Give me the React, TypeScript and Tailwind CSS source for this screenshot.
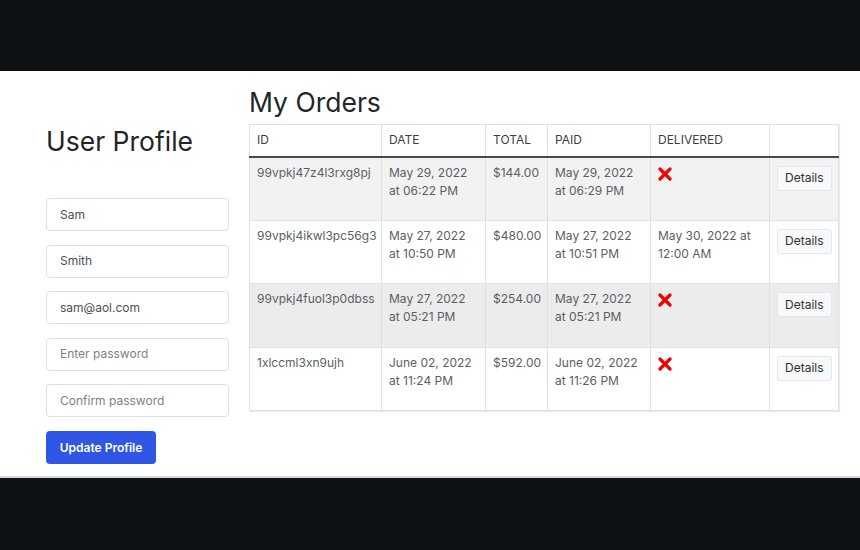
import React from 'react';

type Order = {
  id: string;
  date: [string, string];
  total: string;
  paid: [string, string];
  delivered: [string, string] | null;
};

const orders: Order[] = [
  { id: '99vpkj47z4l3rxg8pj', date: ['May 29, 2022', 'at 06:22 PM'], total: '$144.00', paid: ['May 29, 2022', 'at 06:29 PM'], delivered: null },
  { id: '99vpkj4ikwl3pc56g3', date: ['May 27, 2022', 'at 10:50 PM'], total: '$480.00', paid: ['May 27, 2022', 'at 10:51 PM'], delivered: ['May 30, 2022 at', '12:00 AM'] },
  { id: '99vpkj4fuol3p0dbss', date: ['May 27, 2022', 'at 05:21 PM'], total: '$254.00', paid: ['May 27, 2022', 'at 05:21 PM'], delivered: null },
  { id: '1xlccml3xn9ujh', date: ['June 02, 2022', 'at 11:24 PM'], total: '$592.00', paid: ['June 02, 2022', 'at 11:26 PM'], delivered: null },
];

const rowBg = ['bg-[#f2f2f2]', 'bg-white', 'bg-[#ececec]', 'bg-white'];

const Field: React.FC<{ value?: string; placeholder?: string }> = ({ value, placeholder }) => (
  <div className="h-[33px] w-[183px] rounded-[4px] border border-[#dcdfe4] bg-white px-[13px] flex items-center text-[12px]">
    {value ? <span className="text-[#4a4f55]">{value}</span> : <span className="text-[#7c8288]">{placeholder}</span>}
  </div>
);

const Cross = () => (
  <svg width="14" height="14" viewBox="0 0 14 14" className="mt-[3px]">
    <path d="M2 2 L12 12 M12 2 L2 12" stroke="#f20000" strokeWidth="3.2" strokeLinecap="round" />
  </svg>
);

const cell = 'border-x border-[#dee2e6] px-[7px] pt-[6px] align-top';

export default function App() {
  return (
    <div className="w-[860px] h-[550px] flex flex-col bg-[#0e1114]" style={{ fontFamily: 'Inter, "Noto Sans", sans-serif' }}>
      <div className="h-[71px] shrink-0" />
      <div className="h-[407px] shrink-0 bg-white flex border-b-2 border-[#d3d9e2]">
        {/* profile */}
        <div className="w-[249px] shrink-0 pl-[46px] pt-[53px]">
          <h1 className="text-[26.5px] leading-[34px] text-[#212529] font-normal">User Profile</h1>
          <div className="mt-[40px] flex flex-col gap-[13.5px]">
            <Field value="Sam" />
            <Field value="Smith" />
            <Field value="sam@aol.com" />
            <Field placeholder="Enter password" />
            <Field placeholder="Confirm password" />
          </div>
          <button className="mt-[14px] h-[33px] w-[110px] rounded-[4px] bg-[#3056e6] text-white text-[12px] font-semibold">
            Update Profile
          </button>
        </div>

        {/* orders */}
        <div className="w-[590px] shrink-0 pt-[14px]">
          <h2 className="text-[26.5px] leading-[34px] text-[#212529] font-normal mb-[5px]">My Orders</h2>
          <table className="table-fixed w-[589px] border-collapse text-[12px] leading-[18px] border border-[#dee2e6] shadow-[1px_1px_1px_rgba(0,0,0,0.08)]">
            <colgroup>
              <col className="w-[132px]" />
              <col className="w-[104px]" />
              <col className="w-[62px]" />
              <col className="w-[103px]" />
              <col className="w-[119px]" />
              <col className="w-[69px]" />
            </colgroup>
            <thead>
              <tr className="h-[32px] border-b-2 border-[#454a4f]">
                {['ID', 'DATE', 'TOTAL', 'PAID', 'DELIVERED', ''].map((h, i) => (
                  <th key={i} className="border-x border-[#dee2e6] px-[7px] text-left font-normal text-[#3b3f44] align-middle">
                    {h}
                  </th>
                ))}
              </tr>
            </thead>
            <tbody>
              {orders.map((o, i) => (
                <tr key={o.id} className={`h-[63.5px] border-b border-[#dee2e6] ${rowBg[i]} text-[#5a5f65]`}>
                  <td className={cell}>{o.id}</td>
                  <td className={cell}>
                    {o.date[0]}
                    <br />
                    {o.date[1]}
                  </td>
                  <td className={cell}>{o.total}</td>
                  <td className={cell}>
                    {o.paid[0]}
                    <br />
                    {o.paid[1]}
                  </td>
                  <td className={cell}>
                    {o.delivered ? (
                      <>
                        {o.delivered[0]}
                        <br />
                        {o.delivered[1]}
                      </>
                    ) : (
                      <Cross />
                    )}
                  </td>
                  <td className={cell}>
                    <button className="mt-[2px] h-[25px] px-[7px] rounded-[3px] border border-[#e3e6ea] bg-[#f8f9fa] text-[#2b2f33] text-[12px]">
                      Details
                    </button>
                  </td>
                </tr>
              ))}
            </tbody>
          </table>
        </div>
      </div>
      <div className="flex-1" />
    </div>
  );
}
